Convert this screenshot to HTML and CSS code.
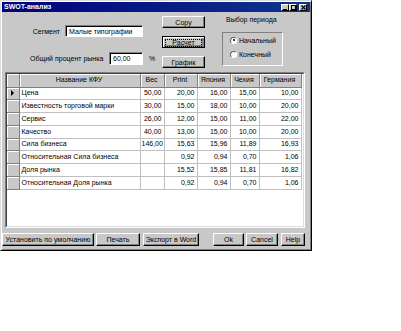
FILE: index.html
```html
<!DOCTYPE html>
<html>
<head>
    <meta charset="utf-8">
    <title>SWOT-анализ</title>
    <link rel="stylesheet" href="styles.css">
</head>
<body>
<div class="window">
    <div class="caption">
        <span class="caption-text">SWOT-анализ</span>
        <span class="caption-btns">
            <span class="cbtn"><svg width="5" height="5" viewBox="0 0 5 5"><rect x="0" y="4" width="4" height="1" fill="#000"/></svg></span>
            <span class="cbtn"><svg width="5" height="5" viewBox="0 0 5 5"><rect x="0.5" y="0.5" width="4" height="4" fill="none" stroke="#000"/><rect x="0" y="0" width="5" height="1" fill="#000"/></svg></span>
            <span class="cbtn cbtn-close"><svg width="5" height="5" viewBox="0 0 5 5"><path d="M0.5 0.5L4.5 4.5M4.5 0.5L0.5 4.5" stroke="#000" stroke-width="1.2"/></svg></span>
        </span>
    </div>
    <div class="client">
        <div class="top">
            <div class="fields">
                <div class="field field-seg">
                    <label class="lbl lbl-seg">Сегмент</label>
                    <span class="edit edit-seg">Малые типографии</span>
                </div>
                <div class="field field-pct">
                    <label class="lbl lbl-pct">Общий процент рынка</label>
                    <span class="edit edit-pct">60,00</span>
                    <span class="unit">%</span>
                </div>
            </div>
            <div class="actions">
                <button class="btn">Copy</button>
                <button class="btn btn-default"><span class="focus">Расчет</span></button>
                <button class="btn">График</button>
            </div>
            <div class="period">
                <div class="period-title">Выбор периода</div>
                <div class="period-box">
                    <div class="radio"><span class="dot checked"></span>Начальный</div>
                    <div class="radio"><span class="dot"></span>Конечный</div>
                </div>
            </div>
        </div>

        <div class="grid">
            <div class="grid-inner">
                <table>
                    <colgroup>
                        <col class="c-ind"><col class="c-name"><col class="c-w">
                        <col class="c-pr"><col class="c-jp"><col class="c-cz"><col class="c-de">
                    </colgroup>
                    <tr class="head">
                        <th class="ind"></th><th>Название КФУ</th><th>Вес</th><th>Print</th><th>Япония</th><th>Чехия</th><th>Германия</th>
                    </tr>
                    <tr><td class="ind"><span class="arrow"></span></td><td class="name">Цена</td><td>50,00</td><td>20,00</td><td>16,00</td><td>15,00</td><td>10,00</td></tr>
                    <tr><td class="ind"></td><td class="name">Известность торговой марки</td><td>30,00</td><td>15,00</td><td>18,00</td><td>10,00</td><td>20,00</td></tr>
                    <tr><td class="ind"></td><td class="name">Сервис</td><td>26,00</td><td>12,00</td><td>15,00</td><td>11,00</td><td>22,00</td></tr>
                    <tr><td class="ind"></td><td class="name">Качество</td><td>40,00</td><td>13,00</td><td>15,00</td><td>10,00</td><td>20,00</td></tr>
                    <tr><td class="ind"></td><td class="name">Сила бизнеса</td><td>146,00</td><td>15,63</td><td>15,96</td><td>11,89</td><td>16,93</td></tr>
                    <tr><td class="ind"></td><td class="name">Относительная Сила бизнеса</td><td></td><td>0,92</td><td>0,94</td><td>0,70</td><td>1,06</td></tr>
                    <tr><td class="ind"></td><td class="name">Доля рынка</td><td></td><td>15,52</td><td>15,85</td><td>11,81</td><td>16,82</td></tr>
                    <tr><td class="ind"></td><td class="name">Относительная Доля рынка</td><td></td><td>0,92</td><td>0,94</td><td>0,70</td><td>1,06</td></tr>
                </table>
            </div>
        </div>

        <div class="bottom">
            <div class="bgroup">
                <button class="btn b-def">Установить по умолчанию</button>
                <button class="btn b-print">Печать</button>
                <button class="btn b-word">Экспорт в Word</button>
            </div>
            <div class="bgroup">
                <button class="btn b-ok">Ok</button>
                <button class="btn b-cancel">Cancel</button>
                <button class="btn b-help">Help</button>
            </div>
        </div>
    </div>
</div>
</body>
</html>
```

FILE: styles.css
```css
*{margin:0;padding:0;box-sizing:border-box;}
body{background:#fff;font-family:"Liberation Sans",Arial,sans-serif;font-size:7px;color:#000;}

.window{width:312px;height:251px;padding:1px;background:#c8c8c8;border:1px solid;border-color:#dcdcdc #000 #000 #dcdcdc;box-shadow:inset 1px 1px #fff,inset -1px -1px #808080;display:flex;flex-direction:column;}

/* title bar */
.caption{height:10px;display:flex;align-items:center;justify-content:space-between;padding:0 3px 0 2px;background:linear-gradient(90deg,#00007b,#0f3490);}
.caption-text{color:#fff;font-weight:bold;font-size:7px;line-height:10px;}
.caption-btns{display:flex;}
.cbtn{width:8px;height:7px;display:flex;align-items:center;justify-content:center;background:#c8c8c8;border:1px solid;border-color:#fff #000 #000 #fff;}
.cbtn-close{margin-left:2px;}
.cbtn svg{display:block;}

.client{flex:1;display:flex;flex-direction:column;}

/* top part */
.top{height:60px;display:flex;}
.fields{width:132px;margin-left:28px;}
.field{display:flex;align-items:center;}
.field-seg{margin-top:13px;height:12px;}
.field-pct{margin-top:15px;height:13px;}
.lbl{white-space:nowrap;}
.lbl-seg{width:30px;margin-right:5px;text-align:right;}
.lbl-pct{width:71px;margin-right:8px;}
.edit{height:100%;background:#fff;border:1px solid;border-color:#808080 #fff #fff #808080;box-shadow:inset 1px 1px #000;padding:0 3px;display:flex;align-items:center;white-space:nowrap;overflow:hidden;}
.edit-seg{width:78px;}
.edit-pct{width:34px;}
.unit{margin-left:6px;}

.actions{width:43px;margin-top:4px;display:flex;flex-direction:column;gap:8px;}
.btn{font:inherit;color:#000;height:12px;background:#c8c8c8;border:1px solid;border-color:#fff #000 #000 #fff;box-shadow:inset -1px -1px #808080;padding:0;cursor:default;white-space:nowrap;overflow:hidden;}
.btn-default{border-color:#000;box-shadow:inset 1px 1px #fff,inset -2px -2px #808080;}
.focus{display:inline-block;padding:0 6px;line-height:6px;outline:1px dotted #000;outline-offset:0;}

.period{width:61px;margin-left:17px;}
.period-title{margin-top:4px;padding-left:4px;line-height:8px;white-space:nowrap;}
.period-box{margin-top:8px;height:34px;border:1px solid;border-color:#808080 #fff #fff #808080;padding:3px 0 0 7px;display:flex;flex-direction:column;gap:6px;}
.radio{display:flex;align-items:center;height:8px;white-space:nowrap;}
.dot{width:7px;height:7px;border-radius:50%;background:#fff;border:1px solid;border-color:#606060 #fff #fff #606060;margin-right:2px;position:relative;}
.dot.checked::after{content:"";position:absolute;left:1.5px;top:1.5px;width:2px;height:2px;border-radius:50%;background:#000;}

/* data grid */
.grid{height:156px;width:300px;margin-left:3px;border:1px solid;border-color:#808080 #fff #fff #808080;}
.grid-inner{height:100%;background:#fff;border:1px solid;border-color:#404040 #dcdcdc #dcdcdc #404040;}
table{border-collapse:collapse;table-layout:fixed;width:294px;}
.c-ind{width:12px;}
.c-name{width:121px;}
.c-w{width:24px;}
.c-pr{width:33px;}
.c-jp{width:33px;}
.c-cz{width:29px;}
.c-de{width:42px;}
tr{height:12.75px;}
tr.head{height:13px;}
th,td{font-weight:normal;white-space:nowrap;overflow:hidden;line-height:10px;padding:0 2px 0 1px;}
th{background:#c8c8c8;border-right:1px solid #808080;border-bottom:1px solid #808080;box-shadow:inset 1px 1px #fff;text-align:center;}
td{text-align:right;border-right:1px solid #c0c0c0;border-bottom:1px solid #c0c0c0;}
td.name{text-align:left;padding-left:2px;}
.ind{background:#c8c8c8;border-right:1px solid #808080;border-bottom:1px solid #808080;box-shadow:inset 1px 1px #fff;padding:0;}
.arrow{display:block;width:0;height:0;margin-left:4px;border-top:3.5px solid transparent;border-bottom:3.5px solid transparent;border-left:3.5px solid #000;}

/* bottom buttons */
.bottom{display:flex;justify-content:space-between;margin-top:5px;margin-right:5px;}
.bottom .btn{height:13px;}
.bgroup{display:flex;gap:2px;}
.b-def{width:92px;}
.b-print{width:44px;}
.b-word{width:56px;margin-left:1px;}
.b-ok{width:31px;}
.b-cancel{width:32px;}
.b-help{width:24px;margin-left:1px;}
```
